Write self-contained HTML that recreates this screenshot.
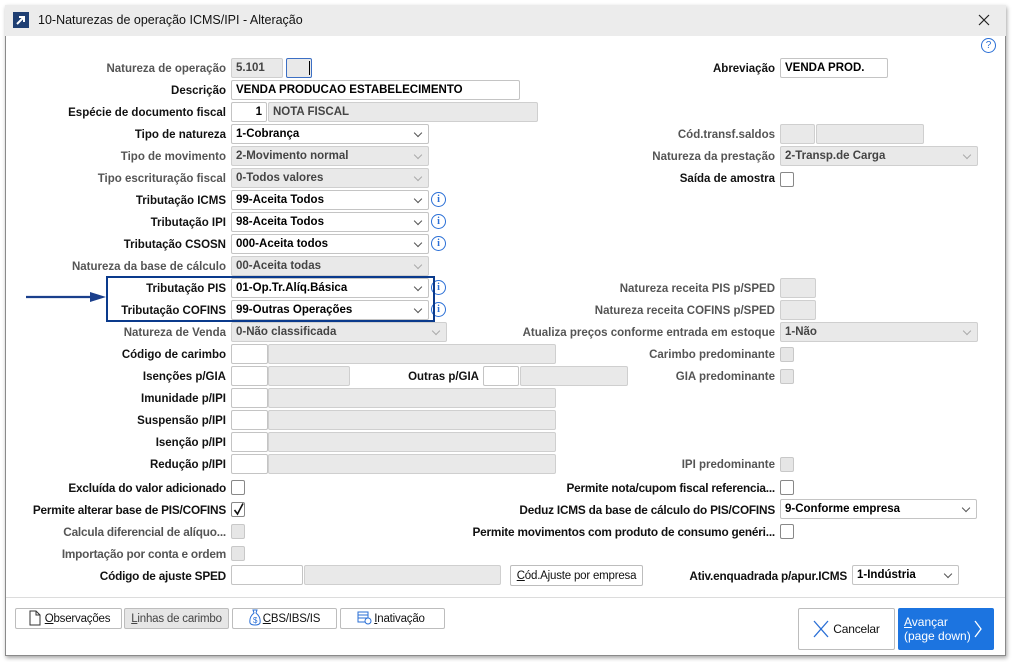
<!DOCTYPE html>
<html><head><meta charset="utf-8"><style>
*{box-sizing:border-box;margin:0;padding:0}
body{width:1015px;height:662px;background:#fff;position:relative;overflow:hidden;font-family:"Liberation Sans",sans-serif}
.win{position:absolute;left:5px;top:5px;width:1001px;height:651px;border:1px solid #8a8a8a;background:#fff;box-shadow:1px 2px 4px rgba(0,0,0,.35)}
.tb{position:absolute;left:5px;top:5px;width:1001px;height:31px;background:#ececec}
.a{position:absolute}
.l{position:absolute;font-size:11.5px;font-weight:bold;color:#111;white-space:nowrap;text-align:right;line-height:21px}
.g{color:#555}
.c{font-size:11.8px;letter-spacing:-.2px}
.i{position:absolute;height:20px;border:1px solid #c4c4c4;border-radius:2px;background:#fff;font-size:11.5px;font-weight:bold;line-height:19px;padding-left:4px;white-space:nowrap;color:#000}
.d{background:#e9e9e9;border-color:#cfcfcf;color:#444}
.s::after{content:"";position:absolute;right:7px;top:5px;width:5px;height:5px;border-right:1px solid #555;border-bottom:1px solid #555;transform:rotate(45deg)}
.s.d::after{border-color:#aaa}
.cb{position:absolute;width:14px;height:15px;border:1px solid #888;border-radius:2px;background:#fff}
.cb.d{background:#e6e6e6;border-color:#c8c8c8}
.inf{position:absolute;width:15px;height:15px;border:1.3px solid #2a6fd6;border-radius:50%;color:#2a6fd6;font:bold 10px "Liberation Serif",serif;text-align:center;line-height:13px}
.btn{position:absolute;height:21px;border:1px solid #bdbdbd;border-radius:2px;background:#fff;font-size:11.5px;line-height:20px;text-align:center;color:#111;letter-spacing:-.2px}
</style></head><body>
<div class="win"></div>
<div class="tb"></div>
<div class="a" style="left:13px;top:12px;width:16px;height:16px;background:#1f3f73"></div>
<svg class="a" style="left:13px;top:12px" width="16" height="16"><path d="M4 12 L11 5 M6 5 H11 V10" stroke="#fff" stroke-width="2" fill="none"/></svg>
<div class="a" style="left:38px;top:13px;font-size:12.5px;color:#111">10-Naturezas de operação ICMS/IPI - Alteração</div>
<svg class="a" style="left:978px;top:14px" width="12" height="12"><path d="M1 1 L11 11 M11 1 L1 11" stroke="#222" stroke-width="1.2"/></svg>
<div class="a" style="left:981px;top:38px;width:15px;height:15px;border:1.3px solid #2a6fd6;border-radius:50%;color:#2a6fd6;font-size:10px;text-align:center;line-height:13px">?</div>

<div class="l g" style="right:789px;top:59px">Natureza de operação</div>
<div class="l" style="right:789px;top:81px">Descrição</div>
<div class="l" style="right:789px;top:103px">Espécie de documento fiscal</div>
<div class="l" style="right:789px;top:125px">Tipo de natureza</div>
<div class="l g" style="right:789px;top:147px">Tipo de movimento</div>
<div class="l g" style="right:789px;top:169px">Tipo escrituração fiscal</div>
<div class="l" style="right:789px;top:191px">Tributação ICMS</div>
<div class="l" style="right:789px;top:213px">Tributação IPI</div>
<div class="l" style="right:789px;top:235px">Tributação CSOSN</div>
<div class="l g" style="right:789px;top:257px">Natureza da base de cálculo</div>
<div class="l" style="right:789px;top:279px">Tributação PIS</div>
<div class="l" style="right:789px;top:301px">Tributação COFINS</div>
<div class="l g" style="right:789px;top:323px">Natureza de Venda</div>
<div class="l" style="right:789px;top:345px">Código de carimbo</div>
<div class="l" style="right:789px;top:367px">Isenções p/GIA</div>
<div class="l" style="right:536px;top:367px">Outras p/GIA</div>
<div class="l" style="right:789px;top:389px">Imunidade p/IPI</div>
<div class="l" style="right:789px;top:411px">Suspensão p/IPI</div>
<div class="l" style="right:789px;top:433px">Isenção p/IPI</div>
<div class="l" style="right:789px;top:455px">Redução p/IPI</div>
<div class="l c" style="right:789px;top:478px">Excluída do valor adicionado</div>
<div class="l c" style="right:789px;top:500px">Permite alterar base de PIS/COFINS</div>
<div class="l c g" style="right:789px;top:522px">Calcula diferencial de alíquo...</div>
<div class="l c g" style="right:789px;top:544px">Importação por conta e ordem</div>
<div class="l c" style="right:789px;top:566px">Código de ajuste SPED</div>

<div class="i d" style="left:231px;top:58px;width:52px">5.101</div>
<div class="i d" style="left:286px;top:58px;width:26px;border-color:#3c6fc4"></div>
<div class="a" style="left:309px;top:61px;width:1px;height:14px;background:#000"></div>
<div class="i" style="left:231px;top:80px;width:289px">VENDA PRODUCAO ESTABELECIMENTO</div>
<div class="i" style="left:231px;top:102px;width:36px;text-align:right;padding-right:4px">1</div>
<div class="i d" style="left:268px;top:102px;width:270px">NOTA FISCAL</div>
<div class="i s" style="left:231px;top:124px;width:198px">1-Cobrança</div>
<div class="i s d" style="left:231px;top:146px;width:198px">2-Movimento normal</div>
<div class="i s d" style="left:231px;top:168px;width:198px">0-Todos valores</div>
<div class="i s" style="left:231px;top:190px;width:198px">99-Aceita Todos</div>
<div class="i s" style="left:231px;top:212px;width:198px">98-Aceita Todos</div>
<div class="i s" style="left:231px;top:234px;width:198px">000-Aceita todos</div>
<div class="i s d" style="left:231px;top:256px;width:198px">00-Aceita todas</div>
<div class="i s" style="left:231px;top:278px;width:198px">01-Op.Tr.Alíq.Básica</div>
<div class="i s" style="left:231px;top:300px;width:198px">99-Outras Operações</div>
<div class="i s d" style="left:231px;top:322px;width:216px">0-Não classificada</div>
<div class="inf" style="left:431px;top:192px">i</div>
<div class="inf" style="left:431px;top:214px">i</div>
<div class="inf" style="left:431px;top:236px">i</div>
<div class="inf" style="left:431px;top:280px">i</div>
<div class="inf" style="left:431px;top:302px">i</div>
<div class="a" style="left:106px;top:276px;width:329px;height:46px;border:2px solid #0a3a8c"></div>
<svg class="a" style="left:24px;top:290px" width="84" height="14"><path d="M2 7 H70" stroke="#1a3f8c" stroke-width="2.2"/><path d="M66 2 L82 7 L66 12 Z" fill="#1a3f8c"/></svg>

<div class="i" style="left:231px;top:344px;width:37px"></div><div class="i d" style="left:268px;top:344px;width:288px"></div>
<div class="i" style="left:231px;top:366px;width:37px"></div><div class="i d" style="left:268px;top:366px;width:82px"></div>
<div class="i" style="left:483px;top:366px;width:36px"></div><div class="i d" style="left:520px;top:366px;width:108px"></div>
<div class="i" style="left:231px;top:388px;width:37px"></div><div class="i d" style="left:268px;top:388px;width:288px"></div>
<div class="i" style="left:231px;top:410px;width:37px"></div><div class="i d" style="left:268px;top:410px;width:288px"></div>
<div class="i" style="left:231px;top:432px;width:37px"></div><div class="i d" style="left:268px;top:432px;width:288px"></div>
<div class="i" style="left:231px;top:454px;width:37px"></div><div class="i d" style="left:268px;top:454px;width:288px"></div>
<div class="cb" style="left:231px;top:480px"></div>
<div class="cb" style="left:231px;top:502px"></div>
<svg class="a" style="left:233px;top:502px" width="12" height="14"><path d="M1.5 8 L4.5 12 L10 1.5" stroke="#111" stroke-width="1.6" fill="none"/></svg>
<div class="cb d" style="left:231px;top:524px"></div>
<div class="cb d" style="left:231px;top:546px"></div>
<div class="i" style="left:231px;top:565px;width:72px"></div><div class="i d" style="left:304px;top:565px;width:197px"></div>
<div class="btn" style="left:510px;top:565px;width:133px"><u>C</u>ód.Ajuste por empresa</div>

<div class="l" style="right:240px;top:59px">Abreviação</div>
<div class="i" style="left:780px;top:58px;width:108px">VENDA PROD.</div>
<div class="l g" style="right:240px;top:125px">Cód.transf.saldos</div>
<div class="i d" style="left:780px;top:124px;width:35px"></div><div class="i d" style="left:816px;top:124px;width:108px"></div>
<div class="l g" style="right:240px;top:147px">Natureza da prestação</div>
<div class="i s d" style="left:780px;top:146px;width:198px">2-Transp.de Carga</div>
<div class="l" style="right:240px;top:169px">Saída de amostra</div>
<div class="cb" style="left:780px;top:172px"></div>
<div class="l g" style="right:240px;top:279px">Natureza receita PIS p/SPED</div>
<div class="i d" style="left:780px;top:278px;width:36px"></div>
<div class="l g" style="right:240px;top:301px">Natureza receita COFINS p/SPED</div>
<div class="i d" style="left:780px;top:300px;width:36px"></div>
<div class="l g" style="right:240px;top:323px">Atualiza preços conforme entrada em estoque</div>
<div class="i s d" style="left:780px;top:322px;width:198px">1-Não</div>
<div class="l g" style="right:240px;top:345px">Carimbo predominante</div>
<div class="cb d" style="left:780px;top:347px"></div>
<div class="l g" style="right:240px;top:367px">GIA predominante</div>
<div class="cb d" style="left:780px;top:369px"></div>
<div class="l g" style="right:240px;top:455px">IPI predominante</div>
<div class="cb d" style="left:780px;top:457px"></div>
<div class="l c" style="right:240px;top:478px">Permite nota/cupom fiscal referencia...</div>
<div class="cb" style="left:780px;top:480px"></div>
<div class="l c" style="right:240px;top:500px">Deduz ICMS da base de cálculo do PIS/COFINS</div>
<div class="i s" style="left:780px;top:499px;width:197px">9-Conforme empresa</div>
<div class="l c" style="right:240px;top:522px">Permite movimentos com produto de consumo genéri...</div>
<div class="cb" style="left:780px;top:524px"></div>
<div class="l c" style="right:168px;top:566px">Ativ.enquadrada p/apur.ICMS</div>
<div class="i s" style="left:852px;top:565px;width:107px">1-Indústria</div>

<div class="a" style="left:6px;top:597px;width:999px;height:1px;background:#dcdcdc"></div>
<div class="btn" style="left:15px;top:608px;width:107px;padding-left:18px"><u>O</u>bservações</div>
<svg class="a" style="left:29px;top:610px" width="12" height="16"><path d="M1 1 H7 L11 5 V15 H1 Z M7 1 V5 H11" stroke="#333" fill="none"/></svg>
<div class="btn" style="left:124px;top:608px;width:105px;background:#e6e6e6;color:#444"><u>L</u>inhas de carimbo</div>
<div class="btn" style="left:232px;top:608px;width:105px;padding-left:14px"><u>C</u>BS/IBS/IS</div>
<svg class="a" style="left:248px;top:609px" width="14" height="17"><path d="M5 1 H9 L8 4 Q13 8 12 14 Q11 16 7 16 Q3 16 2 14 Q1 8 6 4 Z" stroke="#2a6fd6" fill="none"/><text x="5" y="14" font-size="8" fill="#2a6fd6">$</text></svg>
<div class="btn" style="left:340px;top:608px;width:105px;padding-left:14px"><u>I</u>nativação</div>
<svg class="a" style="left:357px;top:611px" width="15" height="14"><rect x="1" y="1" width="10" height="10" stroke="#2a6fd6" fill="none"/><path d="M1 4 H11 M1 7 H11" stroke="#2a6fd6"/><circle cx="11" cy="10" r="3" fill="#fff" stroke="#2a6fd6"/></svg>
<div class="btn" style="left:798px;top:608px;width:97px;height:42px;line-height:40px;padding-left:20px;font-size:12px">Cancelar</div>
<svg class="a" style="left:813px;top:620px" width="16" height="18"><path d="M1 1 L15 17 M15 1 L1 17" stroke="#2a6fd6" stroke-width="1.3"/></svg>
<div class="a" style="left:898px;top:608px;width:96px;height:42px;background:#1c74e0;border-radius:2px;color:#fff;font-size:12px;line-height:14px;padding-top:7px;padding-left:6px"><u>A</u>vançar<br>(page down)</div>
<svg class="a" style="left:973px;top:620px" width="10" height="18"><path d="M2 1 L8 9 L2 17" stroke="#fff" stroke-width="1.3" fill="none"/></svg>
</body></html>
